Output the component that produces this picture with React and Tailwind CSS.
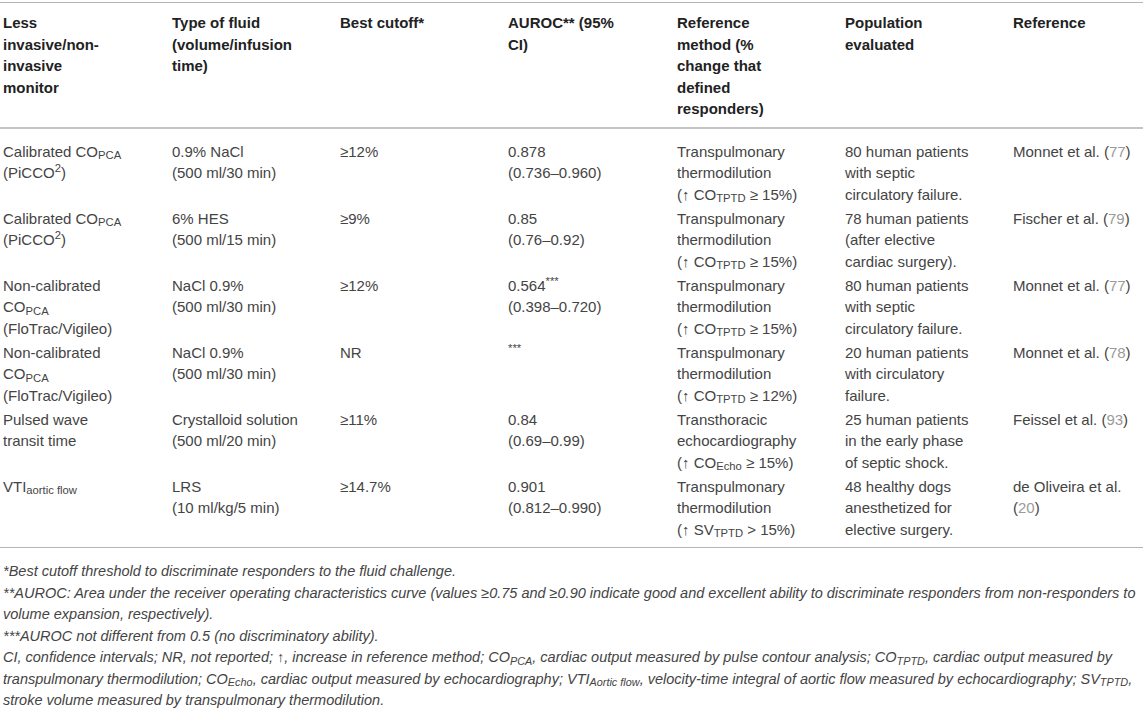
import React from 'react'

const ref = (n) => (
  <>
    (<span className="text-[#9a9a9a]">{n}</span>)
  </>
)

const rows = [
  {
    monitor: (
      <>
        Calibrated CO<sub>PCA</sub>
        <br />
        (PiCCO<sup>2</sup>)
      </>
    ),
    fluid: (
      <>
        0.9% NaCl
        <br />
        (500 ml/30 min)
      </>
    ),
    cutoff: '≥12%',
    auroc: (
      <>
        0.878
        <br />
        (0.736–0.960)
      </>
    ),
    method: (
      <>
        Transpulmonary
        <br />
        thermodilution
        <br />
        (↑ CO<sub>TPTD</sub> ≥ 15%)
      </>
    ),
    population: (
      <>
        80 human patients
        <br />
        with septic
        <br />
        circulatory failure.
      </>
    ),
    reference: <>Monnet et al. {ref(77)}</>,
  },
  {
    monitor: (
      <>
        Calibrated CO<sub>PCA</sub>
        <br />
        (PiCCO<sup>2</sup>)
      </>
    ),
    fluid: (
      <>
        6% HES
        <br />
        (500 ml/15 min)
      </>
    ),
    cutoff: '≥9%',
    auroc: (
      <>
        0.85
        <br />
        (0.76–0.92)
      </>
    ),
    method: (
      <>
        Transpulmonary
        <br />
        thermodilution
        <br />
        (↑ CO<sub>TPTD</sub> ≥ 15%)
      </>
    ),
    population: (
      <>
        78 human patients
        <br />
        (after elective
        <br />
        cardiac surgery).
      </>
    ),
    reference: <>Fischer et al. {ref(79)}</>,
  },
  {
    monitor: (
      <>
        Non-calibrated
        <br />
        CO<sub>PCA</sub>
        <br />
        (FloTrac/Vigileo)
      </>
    ),
    fluid: (
      <>
        NaCl 0.9%
        <br />
        (500 ml/30 min)
      </>
    ),
    cutoff: '≥12%',
    auroc: (
      <>
        0.564<sup>***</sup>
        <br />
        (0.398–0.720)
      </>
    ),
    method: (
      <>
        Transpulmonary
        <br />
        thermodilution
        <br />
        (↑ CO<sub>TPTD</sub> ≥ 15%)
      </>
    ),
    population: (
      <>
        80 human patients
        <br />
        with septic
        <br />
        circulatory failure.
      </>
    ),
    reference: <>Monnet et al. {ref(77)}</>,
  },
  {
    monitor: (
      <>
        Non-calibrated
        <br />
        CO<sub>PCA</sub>
        <br />
        (FloTrac/Vigileo)
      </>
    ),
    fluid: (
      <>
        NaCl 0.9%
        <br />
        (500 ml/30 min)
      </>
    ),
    cutoff: 'NR',
    auroc: <sup>***</sup>,
    method: (
      <>
        Transpulmonary
        <br />
        thermodilution
        <br />
        (↑ CO<sub>TPTD</sub> ≥ 12%)
      </>
    ),
    population: (
      <>
        20 human patients
        <br />
        with circulatory
        <br />
        failure.
      </>
    ),
    reference: <>Monnet et al. {ref(78)}</>,
  },
  {
    monitor: (
      <>
        Pulsed wave
        <br />
        transit time
      </>
    ),
    fluid: (
      <>
        Crystalloid solution
        <br />
        (500 ml/20 min)
      </>
    ),
    cutoff: '≥11%',
    auroc: (
      <>
        0.84
        <br />
        (0.69–0.99)
      </>
    ),
    method: (
      <>
        Transthoracic
        <br />
        echocardiography
        <br />
        (↑ CO<sub>Echo</sub> ≥ 15%)
      </>
    ),
    population: (
      <>
        25 human patients
        <br />
        in the early phase
        <br />
        of septic shock.
      </>
    ),
    reference: <>Feissel et al. {ref(93)}</>,
  },
  {
    monitor: (
      <>
        VTI<sub>aortic flow</sub>
      </>
    ),
    fluid: (
      <>
        LRS
        <br />
        (10 ml/kg/5 min)
      </>
    ),
    cutoff: '≥14.7%',
    auroc: (
      <>
        0.901
        <br />
        (0.812–0.990)
      </>
    ),
    method: (
      <>
        Transpulmonary
        <br />
        thermodilution
        <br />
        (↑ SV<sub>TPTD</sub> &gt; 15%)
      </>
    ),
    population: (
      <>
        48 healthy dogs
        <br />
        anesthetized for
        <br />
        elective surgery.
      </>
    ),
    reference: (
      <>
        de Oliveira et al.
        <br />
        {ref(20)}
      </>
    ),
  },
]

const keys = ['monitor', 'fluid', 'cutoff', 'auroc', 'method', 'population', 'reference']

export default function App() {
  return (
    <div className="w-[1143px] h-[708px] overflow-hidden bg-white font-['Liberation_Sans',Arial,sans-serif]">
      <table className="w-[1143px] table-fixed border-collapse mt-[2px]">
        <colgroup>
          <col className="w-[164px]" />
          <col className="w-[168px]" />
          <col className="w-[168px]" />
          <col className="w-[169px]" />
          <col className="w-[168px]" />
          <col className="w-[168px]" />
          <col className="w-[138px]" />
        </colgroup>
        <thead>
          <tr className="border-t border-b-2 border-t-[#b5b5b5] border-b-[#c4c4c4] text-left align-top text-[15px] font-bold leading-[21.5px] text-[#222] [&>th]:pt-[9px] [&>th]:pb-[7px]">
            <th className="pl-[3px] pr-2">
              Less
              <br />
              invasive/non-
              <br />
              invasive
              <br />
              monitor
            </th>
            <th className="px-2">
              Type of fluid
              <br />
              (volume/infusion
              <br />
              time)
            </th>
            <th className="px-2">Best cutoff*</th>
            <th className="px-2">
              AUROC** (95%
              <br />
              CI)
            </th>
            <th className="px-2">
              Reference
              <br />
              method (%
              <br />
              change that
              <br />
              defined
              <br />
              responders)
            </th>
            <th className="px-2">
              Population
              <br />
              evaluated
            </th>
            <th className="px-2">Reference</th>
          </tr>
        </thead>
        <tbody className="text-[15px] leading-[21.5px] text-[#444]">
          {rows.map((row, i) => (
            <tr
              key={i}
              className={
                'align-top [&>td]:py-[1.25px] ' +
                (i === 0 ? '[&>td]:pt-[12px] ' : '') +
                (i === rows.length - 1 ? 'border-b border-b-[#b5b5b5] [&>td]:pb-[7px]' : '')
              }
            >
              {keys.map((k, j) => (
                <td key={k} className={j === 0 ? 'pl-[3px] pr-2' : 'px-2'}>
                  {row[k]}
                </td>
              ))}
            </tr>
          ))}
        </tbody>
      </table>
      <div className="pl-[3px] pt-[13px] text-[14.5px] italic leading-[21.5px] text-[#444]">
        <p>*Best cutoff threshold to discriminate responders to the fluid challenge.</p>
        <p>
          **AUROC: Area under the receiver operating characteristics curve (values ≥0.75 and ≥0.90 indicate good and excellent ability to discriminate responders from non-responders to
          <br />
          volume expansion, respectively).
        </p>
        <p>***AUROC not different from 0.5 (no discriminatory ability).</p>
        <p>
          CI, confidence intervals; NR, not reported; ↑, increase in reference method; CO<sub>PCA</sub>, cardiac output measured by pulse contour analysis; CO<sub>TPTD</sub>, cardiac output measured by
          <br />
          transpulmonary thermodilution; CO<sub>Echo</sub>, cardiac output measured by echocardiography; VTI<sub>Aortic flow</sub>, velocity-time integral of aortic flow measured by echocardiography; SV<sub>TPTD</sub>,
          <br />
          stroke volume measured by transpulmonary thermodilution.
        </p>
      </div>
    </div>
  )
}
